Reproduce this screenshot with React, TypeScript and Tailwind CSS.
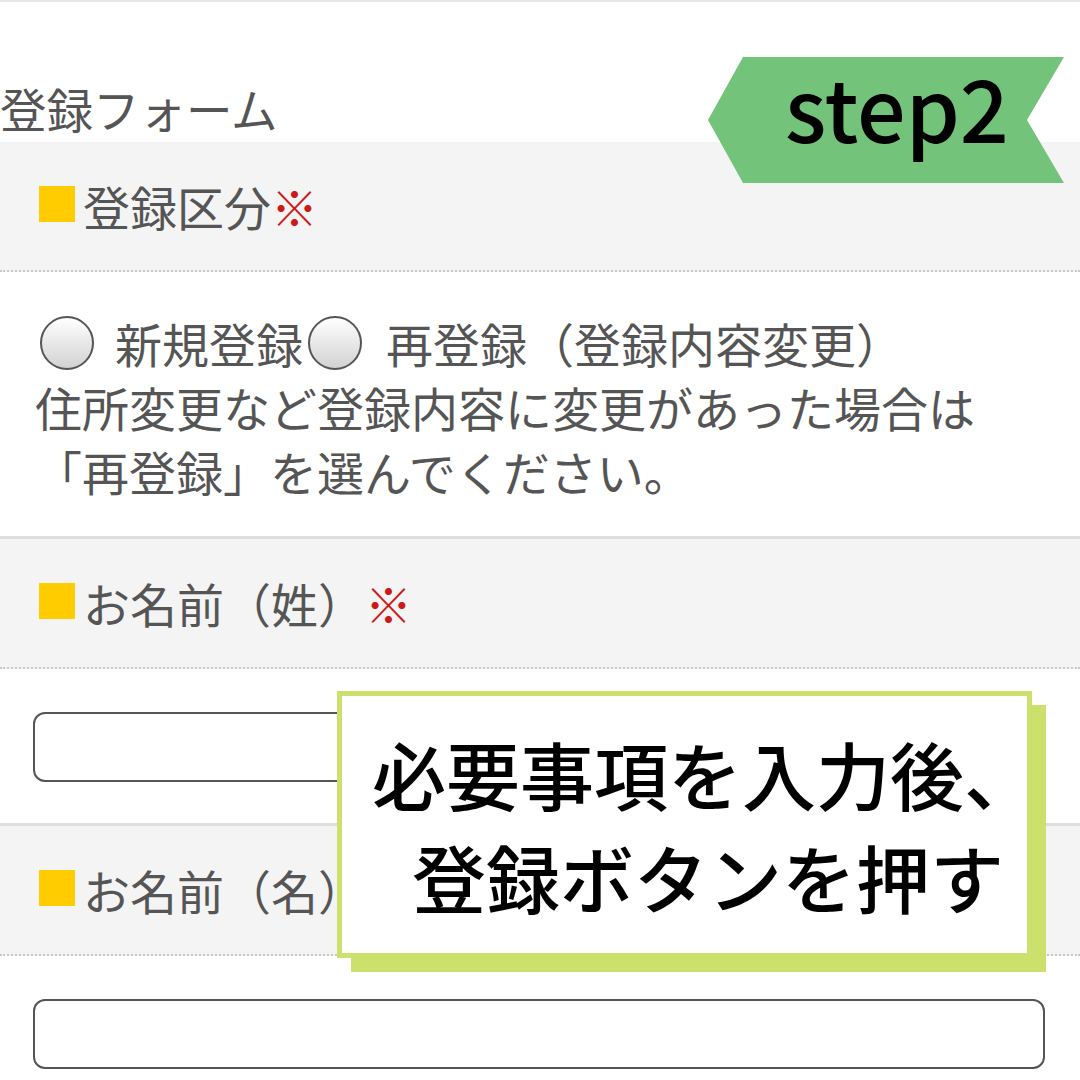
const font = "font-['Noto_Sans_CJK_JP','Noto_Sans',sans-serif]";

function SectionLabel({ text, required }: { text: string; required?: boolean }) {
  return (
    <div className="h-[130px] bg-[#f4f4f4] border-b-2 border-dotted border-[#c9c9c9] flex items-center pl-[39px]">
      <span className="w-[36px] h-[36px] bg-[#ffcc00] mr-[8px] mt-[-4px]" />
      <span className="text-[47px] leading-[64px] text-[#555]">
        {text}
        {required && <span className="text-[#cc1a1a]">※</span>}
      </span>
    </div>
  );
}

function Radio({ className }: { className?: string }) {
  return (
    <span
      className={
        "inline-block w-[54px] h-[54px] rounded-full border-[2.5px] border-[#555] bg-linear-to-b from-white to-[#d2d2d2] shrink-0 " +
        (className ?? "")
      }
    />
  );
}

function TextBox() {
  return <div className="h-[70px] rounded-[12px] border-2 border-[#555] bg-white" />;
}

export default function App() {
  return (
    <div className={`relative w-[1080px] h-[1080px] overflow-hidden bg-white ${font}`}>
      <div className="border-t-2 border-[#e6e6e6] pt-[74px] pb-[2px]">
        <h1 className="text-[46.5px] leading-[64px] text-[#555] font-normal">登録フォーム</h1>
      </div>

      <SectionLabel text="登録区分" required />

      <div className="h-[267px] border-b-[3px] border-[#dedede] pt-[39px] pl-[35px] text-[47px] leading-[64px] text-[#555]">
        <div className="flex items-center h-[64px]">
          <Radio className="ml-[5px]" />
          <span className="ml-[21px]">新規登録</span>
          <Radio className="ml-[5px]" />
          <span className="ml-[24px]">再登録（登録内容変更）</span>
        </div>
        <div>住所変更など登録内容に変更があった場合は</div>
        <div>「再登録」を選んでください。</div>
      </div>

      <SectionLabel text="お名前（姓）" required />

      <div className="h-[157px] border-b-[3px] border-[#dedede] pt-[43px] pl-[33px] pr-[35px]">
        <TextBox />
      </div>

      <SectionLabel text="お名前（名）" />

      <div className="pt-[43px] pl-[33px] pr-[35px]">
        <TextBox />
      </div>

      {/* step2 banner */}
      <div className="absolute left-[708px] top-[57px] w-[356px] h-[126px]">
        <svg width="356" height="126" viewBox="0 0 356 126" className="absolute inset-0">
          <polygon points="35,0 356,0 319,63 356,126 35,126 0,63" fill="#74c37b" />
        </svg>
        <span className="absolute left-[77px] top-[6px] text-[86px] leading-none font-medium text-black">
          step2
        </span>
      </div>

      {/* callout */}
      <div className="absolute left-[337px] top-[691px] w-[695px] h-[267px] bg-white border-[5px] border-[#cbe16b] shadow-[14px_14px_0_#cbe16b]">
        <div className="pt-[25px] text-[74px] leading-[103px] font-medium text-black whitespace-nowrap">
          <div className="pl-[30px]">必要事項を入力後、</div>
          <div className="pl-[70px]">登録ボタンを押す</div>
        </div>
      </div>
    </div>
  );
}
